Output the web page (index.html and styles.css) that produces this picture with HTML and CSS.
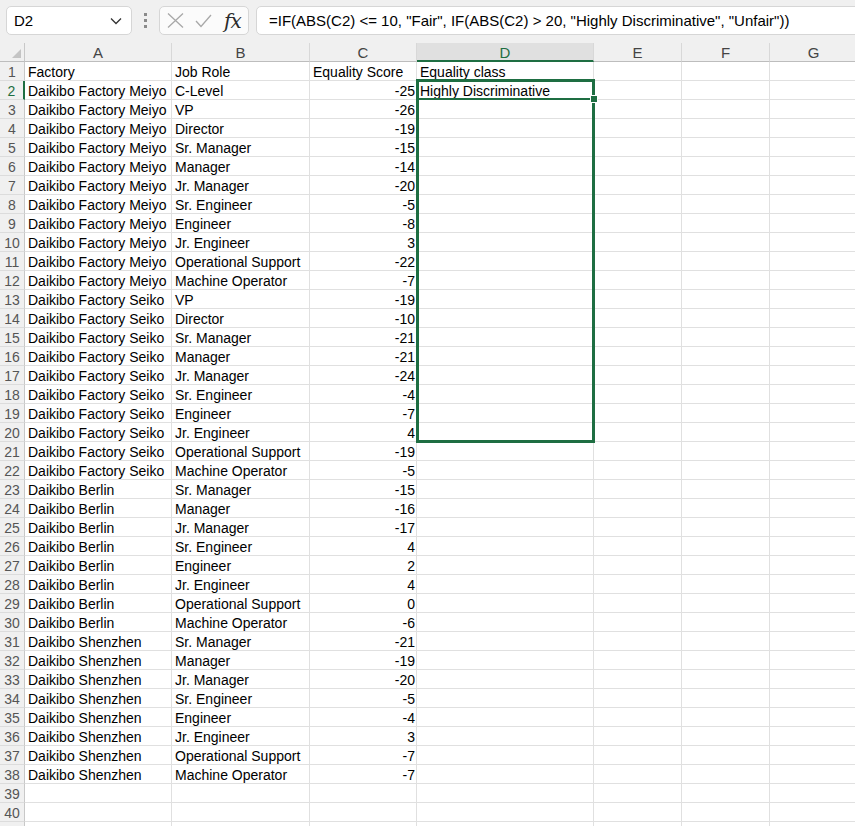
FILE: index.html
```html
<!DOCTYPE html>
<html>
<head>
<meta charset="utf-8">
<link rel="stylesheet" href="styles.css">
</head>
<body>
<div class="toolbar">
  <div class="namebox"><span>D2</span>
    <svg class="chev" width="12" height="8" viewBox="0 0 12 8"><path d="M1 1.5 L6 6.5 L11 1.5" fill="none" stroke="#333" stroke-width="1.3"/></svg>
  </div>
  <div class="dots"><i></i><i></i><i></i></div>
  <div class="fxbox">
    <svg width="17" height="15" viewBox="0 0 17 15"><path d="M1 0.5 L16 14.5 M16 0.5 L1 14.5" stroke="#a8a8a8" stroke-width="1.3" fill="none"/></svg>
    <svg width="17" height="14" viewBox="0 0 17 14"><path d="M1 7 L6 12.5 L16 1" stroke="#a8a8a8" stroke-width="1.3" fill="none"/></svg>
    <span class="fx">fx</span>
  </div>
  <div class="formula">=IF(ABS(C2) &lt;= 10, "Fair", IF(ABS(C2) &gt; 20, "Highly Discriminative", "Unfair"))</div>
</div>
<div class="sheet">
  <div class="row hdr">
    <div class="corner"><svg width="9" height="9" viewBox="0 0 9 9"><polygon points="9,0 9,9 0,9" fill="#c4c4c4"/></svg></div>
    <div class="ch">A</div><div class="ch">B</div><div class="ch">C</div><div class="ch sel">D</div><div class="ch">E</div><div class="ch">F</div><div class="ch">G</div>
  </div>
  <div class="row"><div class="rh">1</div><div class="c">Factory</div><div class="c">Job Role</div><div class="c">Equality Score</div><div class="c">Equality class</div><div class="c"></div><div class="c"></div><div class="c"></div></div>
  <div class="row"><div class="rh act">2</div><div class="c">Daikibo Factory Meiyo</div><div class="c">C-Level</div><div class="c n">-25</div><div class="c">Highly Discriminative</div><div class="c"></div><div class="c"></div><div class="c"></div></div>
  <div class="row"><div class="rh">3</div><div class="c">Daikibo Factory Meiyo</div><div class="c">VP</div><div class="c n">-26</div><div class="c"></div><div class="c"></div><div class="c"></div><div class="c"></div></div>
  <div class="row"><div class="rh">4</div><div class="c">Daikibo Factory Meiyo</div><div class="c">Director</div><div class="c n">-19</div><div class="c"></div><div class="c"></div><div class="c"></div><div class="c"></div></div>
  <div class="row"><div class="rh">5</div><div class="c">Daikibo Factory Meiyo</div><div class="c">Sr. Manager</div><div class="c n">-15</div><div class="c"></div><div class="c"></div><div class="c"></div><div class="c"></div></div>
  <div class="row"><div class="rh">6</div><div class="c">Daikibo Factory Meiyo</div><div class="c">Manager</div><div class="c n">-14</div><div class="c"></div><div class="c"></div><div class="c"></div><div class="c"></div></div>
  <div class="row"><div class="rh">7</div><div class="c">Daikibo Factory Meiyo</div><div class="c">Jr. Manager</div><div class="c n">-20</div><div class="c"></div><div class="c"></div><div class="c"></div><div class="c"></div></div>
  <div class="row"><div class="rh">8</div><div class="c">Daikibo Factory Meiyo</div><div class="c">Sr. Engineer</div><div class="c n">-5</div><div class="c"></div><div class="c"></div><div class="c"></div><div class="c"></div></div>
  <div class="row"><div class="rh">9</div><div class="c">Daikibo Factory Meiyo</div><div class="c">Engineer</div><div class="c n">-8</div><div class="c"></div><div class="c"></div><div class="c"></div><div class="c"></div></div>
  <div class="row"><div class="rh">10</div><div class="c">Daikibo Factory Meiyo</div><div class="c">Jr. Engineer</div><div class="c n">3</div><div class="c"></div><div class="c"></div><div class="c"></div><div class="c"></div></div>
  <div class="row"><div class="rh">11</div><div class="c">Daikibo Factory Meiyo</div><div class="c">Operational Support</div><div class="c n">-22</div><div class="c"></div><div class="c"></div><div class="c"></div><div class="c"></div></div>
  <div class="row"><div class="rh">12</div><div class="c">Daikibo Factory Meiyo</div><div class="c">Machine Operator</div><div class="c n">-7</div><div class="c"></div><div class="c"></div><div class="c"></div><div class="c"></div></div>
  <div class="row"><div class="rh">13</div><div class="c">Daikibo Factory Seiko</div><div class="c">VP</div><div class="c n">-19</div><div class="c"></div><div class="c"></div><div class="c"></div><div class="c"></div></div>
  <div class="row"><div class="rh">14</div><div class="c">Daikibo Factory Seiko</div><div class="c">Director</div><div class="c n">-10</div><div class="c"></div><div class="c"></div><div class="c"></div><div class="c"></div></div>
  <div class="row"><div class="rh">15</div><div class="c">Daikibo Factory Seiko</div><div class="c">Sr. Manager</div><div class="c n">-21</div><div class="c"></div><div class="c"></div><div class="c"></div><div class="c"></div></div>
  <div class="row"><div class="rh">16</div><div class="c">Daikibo Factory Seiko</div><div class="c">Manager</div><div class="c n">-21</div><div class="c"></div><div class="c"></div><div class="c"></div><div class="c"></div></div>
  <div class="row"><div class="rh">17</div><div class="c">Daikibo Factory Seiko</div><div class="c">Jr. Manager</div><div class="c n">-24</div><div class="c"></div><div class="c"></div><div class="c"></div><div class="c"></div></div>
  <div class="row"><div class="rh">18</div><div class="c">Daikibo Factory Seiko</div><div class="c">Sr. Engineer</div><div class="c n">-4</div><div class="c"></div><div class="c"></div><div class="c"></div><div class="c"></div></div>
  <div class="row"><div class="rh">19</div><div class="c">Daikibo Factory Seiko</div><div class="c">Engineer</div><div class="c n">-7</div><div class="c"></div><div class="c"></div><div class="c"></div><div class="c"></div></div>
  <div class="row"><div class="rh">20</div><div class="c">Daikibo Factory Seiko</div><div class="c">Jr. Engineer</div><div class="c n">4</div><div class="c"></div><div class="c"></div><div class="c"></div><div class="c"></div></div>
  <div class="row"><div class="rh">21</div><div class="c">Daikibo Factory Seiko</div><div class="c">Operational Support</div><div class="c n">-19</div><div class="c"></div><div class="c"></div><div class="c"></div><div class="c"></div></div>
  <div class="row"><div class="rh">22</div><div class="c">Daikibo Factory Seiko</div><div class="c">Machine Operator</div><div class="c n">-5</div><div class="c"></div><div class="c"></div><div class="c"></div><div class="c"></div></div>
  <div class="row"><div class="rh">23</div><div class="c">Daikibo Berlin</div><div class="c">Sr. Manager</div><div class="c n">-15</div><div class="c"></div><div class="c"></div><div class="c"></div><div class="c"></div></div>
  <div class="row"><div class="rh">24</div><div class="c">Daikibo Berlin</div><div class="c">Manager</div><div class="c n">-16</div><div class="c"></div><div class="c"></div><div class="c"></div><div class="c"></div></div>
  <div class="row"><div class="rh">25</div><div class="c">Daikibo Berlin</div><div class="c">Jr. Manager</div><div class="c n">-17</div><div class="c"></div><div class="c"></div><div class="c"></div><div class="c"></div></div>
  <div class="row"><div class="rh">26</div><div class="c">Daikibo Berlin</div><div class="c">Sr. Engineer</div><div class="c n">4</div><div class="c"></div><div class="c"></div><div class="c"></div><div class="c"></div></div>
  <div class="row"><div class="rh">27</div><div class="c">Daikibo Berlin</div><div class="c">Engineer</div><div class="c n">2</div><div class="c"></div><div class="c"></div><div class="c"></div><div class="c"></div></div>
  <div class="row"><div class="rh">28</div><div class="c">Daikibo Berlin</div><div class="c">Jr. Engineer</div><div class="c n">4</div><div class="c"></div><div class="c"></div><div class="c"></div><div class="c"></div></div>
  <div class="row"><div class="rh">29</div><div class="c">Daikibo Berlin</div><div class="c">Operational Support</div><div class="c n">0</div><div class="c"></div><div class="c"></div><div class="c"></div><div class="c"></div></div>
  <div class="row"><div class="rh">30</div><div class="c">Daikibo Berlin</div><div class="c">Machine Operator</div><div class="c n">-6</div><div class="c"></div><div class="c"></div><div class="c"></div><div class="c"></div></div>
  <div class="row"><div class="rh">31</div><div class="c">Daikibo Shenzhen</div><div class="c">Sr. Manager</div><div class="c n">-21</div><div class="c"></div><div class="c"></div><div class="c"></div><div class="c"></div></div>
  <div class="row"><div class="rh">32</div><div class="c">Daikibo Shenzhen</div><div class="c">Manager</div><div class="c n">-19</div><div class="c"></div><div class="c"></div><div class="c"></div><div class="c"></div></div>
  <div class="row"><div class="rh">33</div><div class="c">Daikibo Shenzhen</div><div class="c">Jr. Manager</div><div class="c n">-20</div><div class="c"></div><div class="c"></div><div class="c"></div><div class="c"></div></div>
  <div class="row"><div class="rh">34</div><div class="c">Daikibo Shenzhen</div><div class="c">Sr. Engineer</div><div class="c n">-5</div><div class="c"></div><div class="c"></div><div class="c"></div><div class="c"></div></div>
  <div class="row"><div class="rh">35</div><div class="c">Daikibo Shenzhen</div><div class="c">Engineer</div><div class="c n">-4</div><div class="c"></div><div class="c"></div><div class="c"></div><div class="c"></div></div>
  <div class="row"><div class="rh">36</div><div class="c">Daikibo Shenzhen</div><div class="c">Jr. Engineer</div><div class="c n">3</div><div class="c"></div><div class="c"></div><div class="c"></div><div class="c"></div></div>
  <div class="row"><div class="rh">37</div><div class="c">Daikibo Shenzhen</div><div class="c">Operational Support</div><div class="c n">-7</div><div class="c"></div><div class="c"></div><div class="c"></div><div class="c"></div></div>
  <div class="row"><div class="rh">38</div><div class="c">Daikibo Shenzhen</div><div class="c">Machine Operator</div><div class="c n">-7</div><div class="c"></div><div class="c"></div><div class="c"></div><div class="c"></div></div>
  <div class="row"><div class="rh">39</div><div class="c"></div><div class="c"></div><div class="c"></div><div class="c"></div><div class="c"></div><div class="c"></div><div class="c"></div></div>
  <div class="row"><div class="rh">40</div><div class="c"></div><div class="c"></div><div class="c"></div><div class="c"></div><div class="c"></div><div class="c"></div><div class="c"></div></div>
  <div class="row"><div class="rh"></div><div class="c"></div><div class="c"></div><div class="c"></div><div class="c"></div><div class="c"></div><div class="c"></div><div class="c"></div></div>

  <div class="range"></div>
  <div class="active"></div>
  <div class="handle"></div>
</div>
</body>
</html>
```
FILE: styles.css
```css
html, body {
  margin: 0;
  padding: 0;
  background: #ffffff;
  overflow: hidden;
  width: 855px;
  height: 826px;
}
body {
  font-family: "Liberation Sans", Arial, sans-serif;
  color: #000;
}
.toolbar {
  height: 43px;
  box-sizing: border-box;
  background: #f0f0f0;
  display: flex;
  align-items: flex-start;
  padding: 6px 0 0 6px;
}
.namebox {
  width: 126px;
  height: 29px;
  box-sizing: border-box;
  background: #fff;
  border: 1px solid #d6d6d6;
  border-radius: 5px;
  display: flex;
  align-items: center;
  justify-content: space-between;
  padding: 0 9px 0 7px;
  font-size: 15px;
}
.dots {
  width: 27px;
  height: 29px;
  display: flex;
  flex-direction: column;
  align-items: center;
  justify-content: center;
  gap: 3px;
}
.dots i {
  display: block;
  width: 3px;
  height: 3px;
  background: #8a8a8a;
}
.fxbox {
  width: 90px;
  height: 29px;
  box-sizing: border-box;
  background: #fbfbfb;
  border: 1px solid #d6d6d6;
  border-radius: 5px;
  display: flex;
  align-items: center;
  padding: 0 0 0 7px;
  gap: 11px;
}
.fx {
  font-family: "DejaVu Serif", "Liberation Serif", serif;
  font-style: italic;
  font-size: 20px;
  color: #2b2b2b;
  letter-spacing: -1px;
  margin-left: 1px;
}
.formula {
  flex: 1;
  margin-left: 7px;
  margin-right: -8px;
  height: 29px;
  box-sizing: border-box;
  background: #fff;
  border: 1px solid #d6d6d6;
  border-radius: 5px;
  padding: 0 0 0 12px;
  line-height: 27px;
  font-size: 15px;
  white-space: nowrap;
  overflow: hidden;
}
.sheet {
  position: relative;
}
.row {
  display: grid;
  grid-template-columns: 25px 147px 138px 107px 177px 88px 88px 88px;
  height: 19px;
}
.row > div {
  box-sizing: border-box;
  height: 19px;
  overflow: hidden;
  white-space: nowrap;
}
.c {
  border-right: 1px solid #e0e0e0;
  border-bottom: 1px solid #e0e0e0;
  font-size: 14px;
  line-height: 20px;
  padding: 0 2px 0 3px;
}
.n {
  text-align: right;
  padding-right: 1px;
}
.rh {
  background: #f0f0f0;
  border-right: 1px solid #c8c8c8;
  border-bottom: 1px solid #dcdcdc;
  text-align: center;
  font-size: 14px;
  line-height: 20px;
  color: #555;
}
.rh.act {
  color: #1e6e42;
  border-right: 2px solid #1e6e42;
}
.hdr > div {
  background: #f0f0f0;
  border-bottom: 1px solid #bdbdbd;
}
.corner {
  border-right: 1px solid #c8c8c8;
  display: flex;
  align-items: flex-end;
  justify-content: flex-end;
  padding: 0 3px 3px 0;
}
.ch {
  border-right: 1px solid #d8d8d8;
  text-align: center;
  font-size: 15px;
  line-height: 19px;
  color: #444;
}
.hdr > .ch.sel {
  background: #e0e0e0;
  color: #1e6e42;
  border-bottom: 2px solid #1e6e42;
}
.range {
  position: absolute;
  left: 416px;
  top: 36px;
  width: 179px;
  height: 364px;
  box-sizing: border-box;
  border: 3px solid #1e6e42;
}
.active {
  position: absolute;
  left: 416px;
  top: 36px;
  width: 179px;
  height: 21px;
  box-sizing: border-box;
  border: 3px solid #1e6e42;
  border-bottom-width: 2px;
}
.handle {
  position: absolute;
  left: 590px;
  top: 52px;
  width: 6px;
  height: 6px;
  background: #1e6e42;
  border: 1px solid #fff;
  box-sizing: content-box;
}
```
